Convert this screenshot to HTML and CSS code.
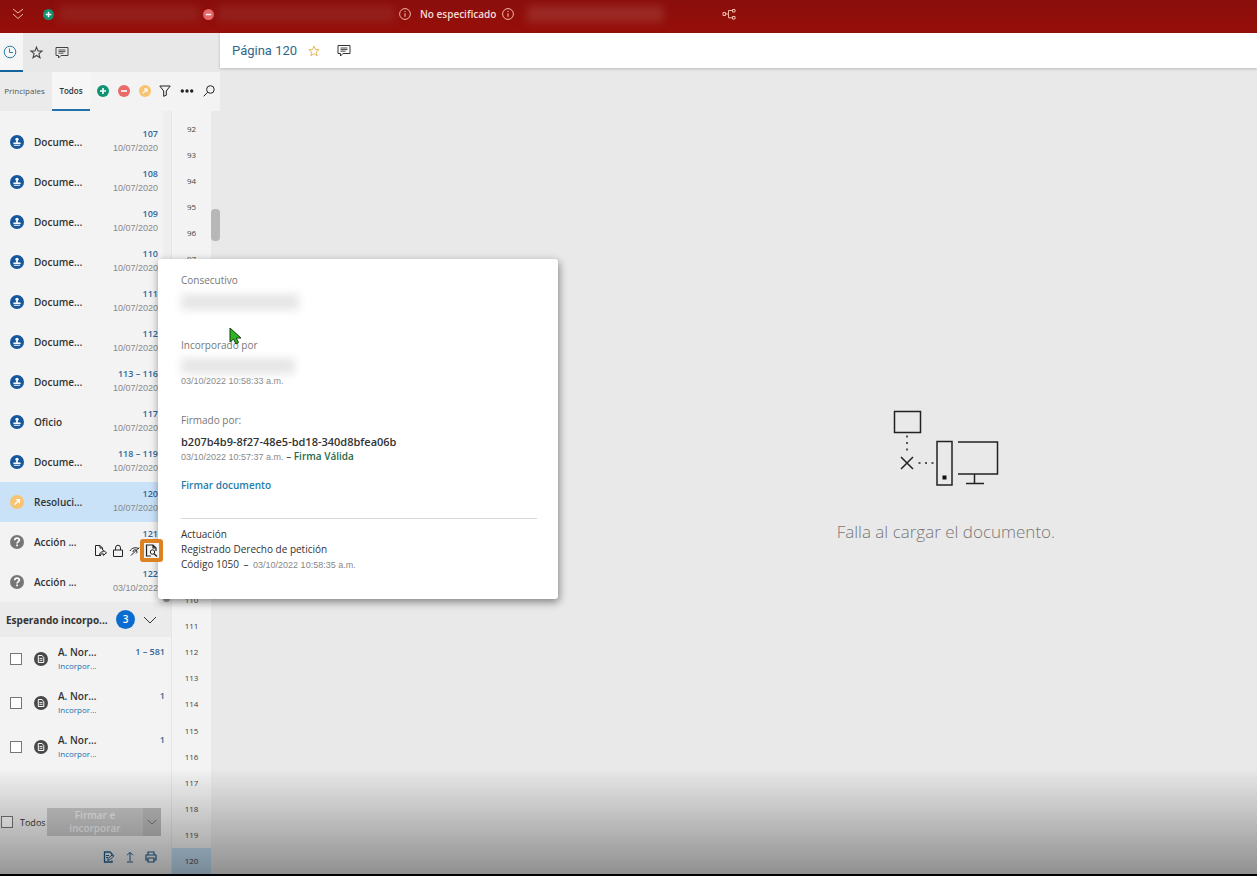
FILE: index.html
```html
<!DOCTYPE html>
<html lang="es">
<head>
    <meta charset="UTF-8">
    <meta name="viewport" content="width=device-width, initial-scale=1.0">
    <title>Expediente - Página 120</title>
    <link rel="stylesheet" href="styles.css">
</head>
<body>
    <!-- Iconos compartidos -->
    <svg class="icon-defs" aria-hidden="true">
        <symbol id="i-plus" viewBox="0 0 12 12"><circle cx="6" cy="6" r="6" fill="#0f9373"/><path d="M6 3v6M3 6h6" stroke="#fff" stroke-width="1.6"/></symbol>
        <symbol id="i-minus" viewBox="0 0 12 12"><circle cx="6" cy="6" r="6" fill="#ea6a6a"/><path d="M3 6h6" stroke="#fff" stroke-width="1.6"/></symbol>
        <symbol id="i-arrow" viewBox="0 0 12 12"><circle cx="6" cy="6" r="6" fill="#f8c471"/><path d="M3.8 8.3L7.6 4.4M5 4h3v3" fill="none" stroke="#fff" stroke-width="1.2"/></symbol>
        <symbol id="i-info" viewBox="0 0 12 12"><circle cx="6" cy="6" r="5.4" fill="none" stroke="currentColor"/><path d="M6 5.2v3.6M6 3v1.1" stroke="currentColor" stroke-width="1.1"/></symbol>
        <symbol id="i-star" viewBox="0 0 12 12"><path d="M6 1l1.4 3.5 3.7.2-2.9 2.4 1 3.7L6 8.7l-3.2 2.1 1-3.7L.9 4.7l3.7-.2z" fill="none" stroke="currentColor"/></symbol>
        <symbol id="i-comment" viewBox="0 0 14 13"><path d="M1 1.5h12v8H6L3.5 12V9.5H1z" fill="none" stroke="currentColor"/><path d="M3.5 4h7M3.5 5.6h7M3.5 7.2h5" stroke="currentColor" stroke-width=".9"/></symbol>
        <symbol id="i-stamp" viewBox="0 0 14 14"><circle cx="7" cy="7" r="7" fill="#14579c"/><circle cx="7" cy="4.3" r="1.6" fill="#fff"/><path d="M6.4 5h1.2l.3 2.4h2.7v1.5H3.4V7.4h2.7zM3.8 9.8h6.4v1H3.8z" fill="#fff"/></symbol>
        <symbol id="i-question" viewBox="0 0 14 14"><circle cx="7" cy="7" r="7" fill="#767676"/><path d="M4.7 5.3C4.8 3.9 5.700 3.200 7 3.200c1.300 0 2.300.7 2.300 1.900 0 1.500-2.200 1.700-2.200 3.300M7.100 9.500v1.700" fill="none" stroke="#fff" stroke-width="1.700"/></symbol>
        <symbol id="i-doc" viewBox="0 0 14 14"><circle cx="7" cy="7" r="7" fill="#484848"/><path d="M4.300 3.500h3.600l1.900 1.900v5.100H4.300z" fill="none" stroke="#fff"/><path d="M5.500 6.400h3M5.500 8.300h3" stroke="#fff" stroke-width=".9"/></symbol>
        <symbol id="i-down" viewBox="0 0 14 8"><path d="M1 1l6 6 6-6" fill="none" stroke="currentColor"/></symbol>
    </svg>

    <!-- Barra superior -->
    <header class="topbar">
        <button class="icon-btn" aria-label="Desplegar"><svg width="12" height="12" viewBox="0 0 12 12"><path d="M1 1l5 4 5-4M1 6l5 4.500L11 6" fill="none" stroke="currentColor"/></svg></button>
        <svg class="top-plus" width="11" height="11"><use href="#i-plus"/></svg>
        <span class="redacted redacted-name"></span>
        <svg width="11" height="11"><use href="#i-minus"/></svg>
        <span class="redacted redacted-party"></span>
        <svg width="12" height="12"><use href="#i-info"/></svg>
        <span class="top-text">No especificado</span>
        <svg width="12" height="12"><use href="#i-info"/></svg>
        <span class="redacted redacted-case"></span>
        <button class="icon-btn top-tree" aria-label="Relacionados"><svg width="14" height="12" viewBox="0 0 14 12"><path d="M1 4.500h2.500v3H1zM3.500 6h3M13 1.500H10.500v2.500H13zM13 8.500H10.500V11H13zM10.500 2.500H6.500v7.300h4" fill="none" stroke="currentColor"/></svg></button>
    </header>

    <div class="workspace">
        <!-- Panel lateral -->
        <aside class="sidebar">
            <nav class="tabs">
                <button class="tab active" aria-label="Historial"><svg width="14" height="14" viewBox="0 0 14 14"><circle cx="7" cy="7" r="5.800" fill="none" stroke="currentColor"/><path d="M6.500 3.500v4h3.500" fill="none" stroke="currentColor"/></svg></button>
                <button class="tab" aria-label="Favoritos"><svg width="13" height="13"><use href="#i-star"/></svg></button>
                <button class="tab" aria-label="Comentarios"><svg width="14" height="13"><use href="#i-comment"/></svg></button>
            </nav>
            <div class="filters">
                <button class="filter-tab">Principales</button>
                <button class="filter-tab active">Todos</button>
                <div class="filter-icons">
                    <button class="icon-btn" aria-label="Agregar"><svg width="12" height="12"><use href="#i-plus"/></svg></button>
                    <button class="icon-btn" aria-label="Quitar"><svg width="12" height="12"><use href="#i-minus"/></svg></button>
                    <button class="icon-btn" aria-label="Resoluciones"><svg width="12" height="12"><use href="#i-arrow"/></svg></button>
                    <button class="icon-btn" aria-label="Filtrar"><svg width="12" height="12" viewBox="0 0 12 12"><path d="M.8 1h10.400L7.300 6v4.200L4.700 11.300V6z" fill="none" stroke="currentColor"/></svg></button>
                    <button class="icon-btn" aria-label="Más"><svg width="14" height="12" viewBox="0 0 14 12" fill="currentColor"><circle cx="2.300" cy="6" r="1.700"/><circle cx="7" cy="6" r="1.700"/><circle cx="11.700" cy="6" r="1.700"/></svg></button>
                    <button class="icon-btn" aria-label="Buscar"><svg width="12" height="12" viewBox="0 0 12 12"><circle cx="7.400" cy="4.500" r="3.800" fill="none" stroke="currentColor"/><path d="M4.700 7.200L.7 11.300" stroke="currentColor"/></svg></button>
                </div>
            </div>

            <div class="panels">
                <div class="docs">
                    <div class="doc-area">
                        <ul class="doc-list"></ul>
                        <div class="list-scroll"><span class="scroll-end"></span></div>
                    </div>
                    <div class="pending-header">
                        <span class="pending-title">Esperando incorpo...</span>
                        <span class="badge">3</span>
                        <button class="icon-btn" aria-label="Contraer"><svg width="14" height="8"><use href="#i-down"/></svg></button>
                    </div>
                    <ul class="pending-list"></ul>
                    <div class="doc-footer">
                        <label class="check-all"><input type="checkbox" class="check"> Todos</label>
                        <button class="sign-btn" disabled>Firmar e incorporar</button>
                        <button class="sign-more" aria-label="Opciones" disabled><svg width="10" height="6"><use href="#i-down"/></svg></button>
                    </div>
                    <div class="doc-tools">
                        <button class="icon-btn" aria-label="Editar"><svg width="12" height="12" viewBox="0 0 12 12"><path d="M9 5V3L7 1H1.500v10H9V9.500" fill="none" stroke="currentColor" stroke-width="1.300"/><path d="M3 4.500h3M3 6.500h2M4.700 9.300l.5-2L9.700 3.500l1.300 1.400-4.400 3.900z" fill="none" stroke="currentColor"/></svg></button>
                        <button class="icon-btn" aria-label="Subir"><svg width="10" height="12" viewBox="0 0 10 12"><path d="M5 10V1.500M2 4.300l3-3 3 3M2 11h6" fill="none" stroke="currentColor"/></svg></button>
                        <button class="icon-btn" aria-label="Imprimir"><svg width="12" height="12" viewBox="0 0 12 12"><path d="M3 4V1h6v3M3 9H1V4h10v5H9M3 7h6v4H3z" fill="none" stroke="currentColor" stroke-width="1.200"/></svg></button>
                    </div>
                </div>
                <ol class="pages"></ol>
                <div class="page-scroll"><span class="scroll-thumb"></span></div>
            </div>
        </aside>

        <!-- Visor -->
        <main class="viewer">
            <div class="viewer-bar">
                <h1 class="viewer-title">Página 120</h1>
                <button class="icon-btn viewer-star" aria-label="Favorito"><svg width="12" height="12"><use href="#i-star"/></svg></button>
                <button class="icon-btn viewer-comment" aria-label="Comentar"><svg width="14" height="13"><use href="#i-comment"/></svg></button>
            </div>
            <div class="load-error">
                <svg width="106" height="76" viewBox="0 0 106 76" fill="none" stroke="#222" stroke-width="1.500">
                    <path d="M1.500 1.500h26v21h-26z"/>
                    <path d="M14 25.500v18M25.500 53h17" stroke-width="2" stroke-dasharray="2 4.500" stroke="#555"/>
                    <path d="M8 47l12 12M20 47L8 59"/>
                    <path d="M44 31.500h15V75H44z"/>
                    <path d="M49.500 65.500h4v4h-4z" fill="#111" stroke="none"/>
                    <path d="M65 32h39.500v32H65M81.500 64v9.500M73 73.500h18"/>
                </svg>
                <p class="load-text">Falla al cargar el documento.</p>
            </div>
        </main>
    </div>

    <!-- Detalle del documento -->
    <section class="detail">
        <p class="detail-label">Consecutivo</p>
        <div class="detail-redacted"></div>
        <p class="detail-label detail-added">Incorporado por</p>
        <div class="detail-redacted short"></div>
        <p class="detail-date">03/10/2022 10:58:33 a.m.</p>
        <p class="detail-label detail-signed">Firmado por:</p>
        <p class="detail-hash">b207b4b9-8f27-48e5-bd18-340d8bfea06b</p>
        <p class="detail-line"><span class="detail-date">03/10/2022 10:57:37 a.m.</span> – <strong class="valid">Firma Válida</strong></p>
        <a href="#" class="sign-link">Firmar documento</a>
        <div class="detail-action">
            <p>Actuación</p>
            <p>Registrado Derecho de petición</p>
            <p>Código 1050 <span class="dash">–</span> <span class="detail-date">03/10/2022 10:58:35 a.m.</span></p>
        </div>
    </section>

    <svg class="cursor" width="14" height="18" viewBox="0 0 14 18"><path d="M1 1v14l3.500-3 2.500 5 2.500-1.300L7.300 11H12z" fill="#2fb51f" stroke="#173c12"/></svg>
    <div class="shade"></div>

    <script>
        const docs = [
            { name: "Docume...", pages: "107", date: "10/07/2020", icon: "stamp" },
            { name: "Docume...", pages: "108", date: "10/07/2020", icon: "stamp" },
            { name: "Docume...", pages: "109", date: "10/07/2020", icon: "stamp" },
            { name: "Docume...", pages: "110", date: "10/07/2020", icon: "stamp" },
            { name: "Docume...", pages: "111", date: "10/07/2020", icon: "stamp" },
            { name: "Docume...", pages: "112", date: "10/07/2020", icon: "stamp" },
            { name: "Docume...", pages: "113 – 116", date: "10/07/2020", icon: "stamp" },
            { name: "Oficio", pages: "117", date: "10/07/2020", icon: "stamp" },
            { name: "Docume...", pages: "118 – 119", date: "10/07/2020", icon: "stamp" },
            { name: "Resoluci...", pages: "120", date: "10/07/2020", icon: "arrow", active: true },
            { name: "Acción ...", pages: "121", icon: "question" },
            { name: "Acción ...", pages: "122", date: "03/10/2022", icon: "question" }
        ];

        const rowActions = `
            <div class="row-actions">
                <button class="icon-btn" aria-label="Mover"><svg width="13" height="13" viewBox="0 0 13 13"><path d="M7 11.500H1.500v-10H6l2.500 2.500v2M6 1.500V4h2.500" fill="none" stroke="currentColor"/><path d="M5.500 11c.3-2.300 1.600-3.300 3.800-3.300V6.200l3.200 2.600-3.200 2.600V9.800c-1.800 0-2.800.2-3.800 1.200z" fill="none" stroke="currentColor"/></svg></button>
                <button class="icon-btn" aria-label="Bloquear"><svg width="12" height="14" viewBox="0 0 12 14"><path d="M1.500 6h9v6.500h-9zM3.500 6V4a2.500 2.800 0 0 1 5 0v2" fill="none" stroke="currentColor"/></svg></button>
                <button class="icon-btn" aria-label="Ocultar"><svg width="11" height="13" viewBox="0 0 11 13"><path d="M1 7c1.500-3 6-4.500 9-2M2 11.500l8-8M4 8a2 2 0 1 1 3 1.500" fill="none" stroke="currentColor"/></svg></button>
                <button class="icon-btn detail-btn" aria-label="Ver detalle"><svg width="13" height="13" viewBox="0 0 13 13"><path d="M6 12H1.500V1H8l3 3v3M8 1v3h3" fill="none" stroke="currentColor" stroke-width="1.200"/><circle cx="7.500" cy="8" r="2.200" fill="none" stroke="currentColor"/><path d="M9 9.700l3 2.800" stroke="currentColor" stroke-width="1.300"/></svg></button>
            </div>`;

        document.querySelector('.doc-list').innerHTML = docs.map(doc => `
            <li class="doc ${doc.active ? 'active' : ''}">
                <svg width="14" height="14"><use href="#i-${doc.icon}"/></svg>
                <span class="doc-name">${doc.name}</span>
                <span class="doc-meta">
                    <span class="doc-pages">${doc.pages}</span>
                    <span class="doc-date">${doc.date || '&nbsp;'}</span>
                </span>
                ${doc.date ? '' : rowActions}
            </li>`).join('');

        document.querySelector('.pending-list').innerHTML = ['1 – 581', '1', '1'].map(pages => `
            <li class="pending">
                <input type="checkbox" class="check" aria-label="A. Nor...">
                <svg width="14" height="14"><use href="#i-doc"/></svg>
                <span class="pending-text">
                    <span class="pending-name">A. Nor...</span>
                    <a href="#" class="pending-link">Incorpor...</a>
                </span>
                <span class="doc-pages">${pages}</span>
            </li>`).join('');

        const pages = document.querySelector('.pages');
        for (let n = 92; n <= 120; n++) {
            const li = document.createElement('li');
            li.textContent = n;
            if (n === 120) li.className = 'active';
            pages.appendChild(li);
        }
    </script>
</body>
</html>
```

FILE: styles.css
```css
* {
    margin: 0;
    padding: 0;
    box-sizing: border-box;
}

body {
    display: flex;
    flex-direction: column;
    height: 100vh;
    border-bottom: 2px solid #000;
    background-color: #e9e9e9;
    font-family: 'Open Sans', 'Noto Sans', sans-serif;
    font-size: 10px;
    color: #333;
    overflow: hidden;
}

button {
    background: none;
    border: none;
    font: inherit;
    color: inherit;
}

svg {
    display: block;
    flex-shrink: 0;
}

ul, ol {
    list-style: none;
}

a {
    text-decoration: none;
}

.icon-defs {
    position: absolute;
    width: 0;
    height: 0;
}

.icon-btn {
    display: flex;
    align-items: center;
    justify-content: center;
}

/* Barra superior */
.topbar {
    display: flex;
    align-items: center;
    height: 33px;
    padding: 0 12px 5px;
    background: linear-gradient(#890e0c, #980f09);
    color: #f3b9a8;
    flex-shrink: 0;
}

.top-plus {
    margin-left: 19px;
}

.top-text {
    width: 78px;
    margin: 0 4px 0 9px;
    font-weight: 600;
    color: #f8dcd6;
    white-space: nowrap;
}

.redacted {
    height: 16px;
    background-color: #9c2a26;
    filter: blur(4px);
}

.redacted-name {
    width: 140px;
    margin: 0 4px 0 5px;
    background-color: #94201c;
}

.redacted-party {
    width: 177px;
    margin: 0 4px;
    background-color: #94201c;
}

.redacted-case {
    width: 136px;
    margin-left: 13px;
}

.top-tree {
    margin-left: 59px;
}

.workspace {
    display: grid;
    grid-template-columns: 220px 1fr;
    flex: 1;
    min-height: 0;
}

/* Panel lateral */
.sidebar {
    display: flex;
    flex-direction: column;
    min-height: 0;
}

.tabs {
    display: flex;
    height: 39px;
    background-color: #e8e8e8;
}

.tab {
    display: flex;
    align-items: center;
    justify-content: center;
    width: 26px;
    color: #444;
}

.tab.active {
    width: 23px;
    padding-right: 3px;
    background-color: #f6f6f6;
    border-bottom: 2px solid #14639c;
    color: #2a80a8;
}

.filters {
    display: flex;
    height: 39px;
    background-color: #f3f3f3;
}

.filter-tab {
    width: 52px;
    padding-right: 3px;
    background-color: #ebebeb;
    border-bottom: 2px solid #ebebeb;
    font-size: 8px;
    color: #555;
    white-space: nowrap;
}

.filter-tab.active {
    width: 38px;
    padding: 0;
    background-color: #f6f6f6;
    border-bottom-color: #2271a8;
    font-weight: 600;
    color: #333;
}

.filter-icons {
    display: flex;
    flex: 1;
    align-items: center;
    justify-content: space-between;
    padding: 0 5px 2px 7px;
    color: #222;
}

.panels {
    display: flex;
    flex: 1;
    min-height: 0;
}

.docs {
    display: flex;
    flex-direction: column;
    width: 171px;
    background-color: #f3f3f3;
}

.doc-area {
    display: flex;
}

.doc-list {
    flex: 1;
    padding-top: 11px;
}

.doc {
    position: relative;
    display: flex;
    align-items: center;
    height: 40px;
    padding: 0 5px 0 10px;
}

.doc.active {
    background-color: #c9e2f7;
}

.doc-name {
    margin-left: 10px;
    font-weight: 600;
}

.doc-meta {
    display: flex;
    flex-direction: column;
    align-items: flex-end;
    margin-left: auto;
    padding-bottom: 2px;
    line-height: 14px;
}

.doc-pages {
    font-size: 9px;
    font-weight: 600;
    color: #2f679c;
}

.doc-date {
    font-family: 'Liberation Sans', Arial, sans-serif;
    font-size: 9px;
    color: #888;
}

.row-actions {
    position: absolute;
    right: 0;
    bottom: 0;
    z-index: 20;
    display: flex;
    align-items: center;
    gap: 5px;
    color: #222;
}

.detail-btn {
    width: 23px;
    height: 23px;
    margin-left: -5px;
    background-color: #f3f3f3;
    border: 4px solid #dc8225;
    border-radius: 3px;
}

.list-scroll {
    display: flex;
    align-items: flex-end;
    width: 8px;
    background-color: #eeeeee;
}

.scroll-end {
    width: 7px;
    height: 7px;
    border-radius: 50%;
    background-color: #999;
}

.pending-header {
    display: flex;
    align-items: center;
    height: 35px;
    padding-left: 6px;
    background-color: #ebebeb;
    flex-shrink: 0;
}

.pending-title {
    width: 104px;
    font-weight: 700;
    white-space: nowrap;
}

.badge {
    width: 19px;
    height: 19px;
    margin: 0 8px 0 6px;
    border-radius: 50%;
    background-color: #0b6cd0;
    color: #fff;
    font-weight: 600;
    line-height: 19px;
    text-align: center;
}

.pending {
    display: flex;
    align-items: center;
    height: 44px;
    padding: 0 6px 0 10px;
}

.check {
    appearance: none;
    width: 12px;
    height: 12px;
    border: 1px solid #777;
    background-color: #fff;
}

.pending svg {
    margin: 0 10px 0 12px;
}

.pending-text {
    display: flex;
    flex-direction: column;
    line-height: 14px;
}

.pending-name {
    font-weight: 600;
}

.pending-link {
    font-size: 8px;
    color: #236fa8;
}

.pending .doc-pages {
    align-self: flex-start;
    margin: 8px 0 0 auto;
}

.doc-footer {
    display: flex;
    align-items: center;
    margin-top: auto;
    padding: 0 10px 0 1px;
}

.check-all {
    display: flex;
    align-items: center;
    gap: 7px;
    width: 46px;
    font-size: 9px;
    white-space: nowrap;
}

.check-all .check {
    flex-shrink: 0;
}

.sign-btn {
    flex: 1;
    height: 28px;
    padding: 0 16px;
    background-color: #cbcbcb;
    font-weight: 600;
    line-height: 13px;
    color: #f0f0f0;
}

.sign-more {
    display: flex;
    align-items: center;
    justify-content: center;
    width: 18px;
    height: 28px;
    background-color: #bdbdbd;
    color: #555;
}

.doc-tools {
    display: flex;
    justify-content: flex-end;
    gap: 10px;
    padding: 15px 14px 11px 0;
    color: #21618f;
}

.pages {
    display: flex;
    flex-direction: column;
    width: 40px;
    padding-top: 4px;
    background-color: #f3f3f3;
    border-left: 1px solid #e6e6e6;
    font-size: 8px;
    color: #444;
}

.pages li {
    display: flex;
    flex: 1;
    align-items: center;
    justify-content: center;
}

.pages .active {
    background-color: #c3def3;
}

.page-scroll {
    width: 9px;
    padding-top: 98px;
}

.scroll-thumb {
    display: block;
    height: 32px;
    border-radius: 4px;
    background-color: #b7b7b7;
}

/* Visor */
.viewer {
    display: flex;
    flex-direction: column;
    min-width: 0;
}

.viewer-bar {
    display: flex;
    align-items: center;
    height: 35px;
    padding-left: 12px;
    background-color: #fff;
    box-shadow: 0 1px 3px rgba(0, 0, 0, 0.2);
}

.viewer-title {
    font-family: Roboto, sans-serif;
    font-size: 13px;
    font-weight: 400;
    color: #2f678c;
}

.viewer-star {
    margin: 0 17px 0 11px;
    color: #e6b65c;
}

.load-error {
    display: flex;
    flex-direction: column;
    align-items: center;
    gap: 34px;
    padding: 342px 0 0 40%;
}

.load-text {
    font-size: 17px;
    font-weight: 300;
    line-height: 24px;
    color: #777;
}

/* Detalle del documento */
.detail {
    position: absolute;
    top: 259px;
    left: 158px;
    z-index: 10;
    width: 400px;
    padding: 14px 21px 26px 23px;
    background-color: #fff;
    border-radius: 3px;
    box-shadow: 1px 3px 8px rgba(0, 0, 0, 0.45);
    line-height: 15px;
}

.detail-label {
    color: #777;
}

.detail-redacted {
    width: 118px;
    height: 16px;
    margin-top: 6px;
    background-color: #e6e6e6;
    filter: blur(4px);
}

.detail-redacted.short {
    width: 114px;
    margin-top: 5px;
}

.detail-added {
    margin-top: 28px;
}

.detail-date {
    font-family: 'Liberation Sans', Arial, sans-serif;
    font-size: 9px;
    color: #888;
}

.detail-signed {
    margin-top: 24px;
}

.detail-hash {
    margin-top: 6px;
    font-size: 11px;
    font-weight: 600;
}

.valid {
    font-weight: 600;
    color: #1f6b49;
}

.sign-link {
    display: block;
    margin-top: 13px;
    font-weight: 600;
    color: #277ca8;
}

.detail-action {
    margin-top: 25px;
    padding-top: 8px;
    border-top: 1px solid #d8d8d8;
    line-height: 15px;
    color: #333;
}

.dash {
    margin: 0 2px;
}

.cursor {
    position: absolute;
    top: 327px;
    left: 229px;
    z-index: 30;
}

/* Sombra inferior */
.shade {
    position: fixed;
    left: 0;
    right: 0;
    bottom: 2px;
    z-index: 40;
    height: 106px;
    background: linear-gradient(rgba(0, 0, 0, 0), rgba(0, 0, 0, 0.38));
    pointer-events: none;
}
```
